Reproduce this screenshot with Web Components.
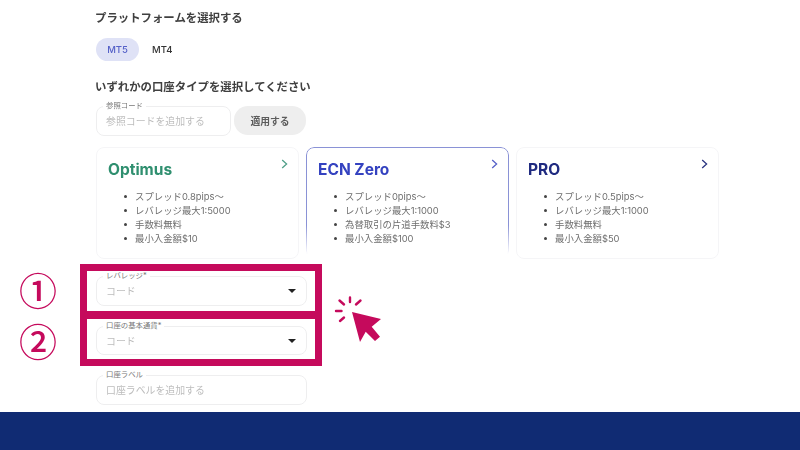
<!DOCTYPE html>
<html lang="ja">
<head>
<meta charset="utf-8">
<style>
  html, body { margin: 0; background: #fff; }
  body { width: 800px; height: 450px; overflow: hidden; position: relative; font-family: Inter, "Noto Sans CJK JP", sans-serif; }
</style>
</head>
<body>
<signup-page>
  <section-title>プラットフォームを選択する</section-title>
  <platform-tabs></platform-tabs>
  <section-title>いずれかの口座タイプを選択してください</section-title>
  <ref-row></ref-row>
  <card-row>
    <account-card name="Optimus" color="#2f8f6f" arrow="#4f9f88" items="スプレッド0.8pips〜|レバレッジ最大1:5000|手数料無料|最小入金額$10"></account-card>
    <account-card name="ECN Zero" color="#3442c0" arrow="#5560c8" selected items="スプレッド0pips〜|レバレッジ最大1:1000|為替取引の片道手数料$3|最小入金額$100"></account-card>
    <account-card name="PRO" color="#1f2a80" arrow="#2a3480" items="スプレッド0.5pips〜|レバレッジ最大1:1000|手数料無料|最小入金額$50"></account-card>
  </card-row>
  <form-field label="レバレッジ*" placeholder="コード" select></form-field>
  <form-field label="口座の基本通貨*" placeholder="コード" select></form-field>
  <form-field label="口座ラベル" placeholder="口座ラベルを追加する"></form-field>
</signup-page>
<step-callouts></step-callouts>
<page-footer></page-footer>

<script>
class SignupPage extends HTMLElement {
  constructor() {
    super();
    this.attachShadow({ mode: 'open' }).innerHTML = `
      <style>
        :host { display: block; height: 412px; box-sizing: border-box; padding: 10px 0 0 96px; overflow: hidden; filter: blur(0.35px); }
      </style>
      <slot></slot>`;
  }
}

class SectionTitle extends HTMLElement {
  constructor() {
    super();
    this.attachShadow({ mode: 'open' }).innerHTML = `
      <style>
        :host { display: block; height: 17px; margin-left: -1px; line-height: 17px; font-size: 11.4px; font-weight: 700; color: #404040; white-space: nowrap; }
      </style>
      <slot></slot>`;
  }
}

class PlatformTabs extends HTMLElement {
  constructor() {
    super();
    this.attachShadow({ mode: 'open' }).innerHTML = `
      <style>
        :host { display: flex; align-items: center; gap: 13px; margin: 11px 0 18px; font-size: 9.5px; font-weight: 500; color: #333; }
        span { height: 23px; line-height: 23px; }
        .on { width: 43px; text-align: center; border-radius: 12px; background: #dfe2f6; color: #5561c8; }
      </style>
      <span class="on">MT5</span><span>MT4</span>`;
  }
}

class RefRow extends HTMLElement {
  constructor() {
    super();
    this.attachShadow({ mode: 'open' }).innerHTML = `
      <style>
        :host { display: flex; gap: 3px; margin-top: 10px; }
        form-field { width: 135px; margin: 0; }
        button { width: 72px; height: 29px; padding: 0; border: 0; border-radius: 14px; background: #eee; color: #5c5c5c; font: 700 9.8px Inter, "Noto Sans CJK JP", sans-serif; }
      </style>
      <form-field label="参照コード" placeholder="参照コードを追加する"></form-field>
      <button>適用する</button>`;
  }
}

class CardRow extends HTMLElement {
  constructor() {
    super();
    this.attachShadow({ mode: 'open' }).innerHTML = `
      <style>
        :host { display: flex; gap: 7px; margin: 11px 0 17.5px; width: 623px; }
      </style>
      <slot></slot>`;
  }
}

class AccountCard extends HTMLElement {
  constructor() {
    super();
    const selected = this.hasAttribute('selected');
    const items = this.getAttribute('items').split('|').map(t => `<li>${t}</li>`).join('');
    this.attachShadow({ mode: 'open' }).innerHTML = `
      <style>
        :host { display: block; position: relative; flex: 1; box-sizing: border-box; height: 112px; padding: 13px 12px; border-radius: 8px; }
        :host::before { content: ''; position: absolute; inset: 0; border: 1px solid ${selected ? '#8a92d6' : '#f5f5f7'}; border-radius: 8px; ${selected ? '-webkit-mask-image: linear-gradient(#000 70%, transparent 96%); mask-image: linear-gradient(#000 70%, transparent 96%);' : ''} }
        header { display: flex; justify-content: space-between; align-items: flex-start; height: 20px; }
        h3 { margin: 0; font-size: 15.5px; line-height: 20px; font-weight: 700; color: ${this.getAttribute('color')}; white-space: nowrap; }
        svg { width: 7px; height: 10px; margin: -1px -1px 0 0; }
        ul { margin: 10px 0 0; padding: 0 0 0 16px; list-style: none; font-size: 9.4px; line-height: 14px; color: #6e6e6e; white-space: nowrap; }
        li { display: flex; align-items: center; gap: 8px; }
        li::before { content: ''; flex: none; width: 3px; height: 3px; border-radius: 50%; background: #444; }
      </style>
      <header>
        <h3>${this.getAttribute('name')}</h3>
        <svg viewBox="0 0 7 10"><path d="M1.2 1 5.6 5 1.2 9" fill="none" stroke="${this.getAttribute('arrow')}" stroke-width="1.3"/></svg>
      </header>
      <ul>${items}</ul>`;
  }
}

class FormField extends HTMLElement {
  constructor() {
    super();
    const caret = this.hasAttribute('select') ? '<i></i>' : '';
    this.attachShadow({ mode: 'open' }).innerHTML = `
      <style>
        :host { display: block; position: relative; box-sizing: border-box; width: 211px; height: 29.5px; margin-bottom: 20px; border: 1px solid #eeeeef; border-radius: 8px; padding: 0 9px; }
        label { position: absolute; left: 6px; top: -6px; padding: 0 3px; background: #fff; font-size: 7.4px; line-height: 9px; color: #777; white-space: nowrap; }
        .box { display: flex; align-items: center; justify-content: space-between; height: 28px; font-size: 9.9px; color: #bdbdbd; white-space: nowrap; }
        i { width: 0; height: 0; margin-right: 1px; border: 4px solid transparent; border-top: 4px solid #222; border-bottom: 0; }
      </style>
      <label>${this.getAttribute('label')}</label>
      <div class="box"><span>${this.getAttribute('placeholder')}</span>${caret}</div>`;
  }
}

// 赤枠と番号、カーソルは画面の上に重ねる注釈
class StepCallouts extends HTMLElement {
  constructor() {
    super();
    this.attachShadow({ mode: 'open' }).innerHTML = `
      <style>
        :host { position: absolute; inset: 0; pointer-events: none; filter: blur(0.3px); }
        .frame { position: absolute; left: 80px; width: 242px; box-sizing: border-box; border: 7px solid #c50a5c; }
        .num { position: absolute; left: 18px; width: 40px; height: 40px; text-align: center; font: 500 38px/40px "Noto Sans CJK JP", sans-serif; color: #c50a5c; }
        svg { position: absolute; left: 330px; top: 290px; width: 60px; height: 60px; }
      </style>
      <div class="frame" style="top:264px;height:54px"></div>
      <div class="frame" style="top:312px;height:54px"></div>
      <div class="num" style="top:269px">①</div>
      <div class="num" style="top:320px">②</div>
      <svg viewBox="330 290 60 60">
        <path d="M352 312 381 319 371.7 326.7 380 336.7 375 341 365.7 331.7 360 342Z" fill="#c50a5c"/>
        <path d="M350 297.5V302M356 304.5 360.5 300.5M344 304.5 339.5 300.5M336 311H341.5M344 317.5 340 321" fill="none" stroke="#c50a5c" stroke-width="2.4" stroke-linecap="round"/>
      </svg>`;
  }
}

class PageFooter extends HTMLElement {
  constructor() {
    super();
    this.attachShadow({ mode: 'open' }).innerHTML = `
      <style>
        :host { display: block; height: 38px; background: #102b73; }
      </style>`;
  }
}

customElements.define('signup-page', SignupPage);
customElements.define('section-title', SectionTitle);
customElements.define('platform-tabs', PlatformTabs);
customElements.define('ref-row', RefRow);
customElements.define('card-row', CardRow);
customElements.define('account-card', AccountCard);
customElements.define('form-field', FormField);
customElements.define('step-callouts', StepCallouts);
customElements.define('page-footer', PageFooter);
</script>
</body>
</html>
